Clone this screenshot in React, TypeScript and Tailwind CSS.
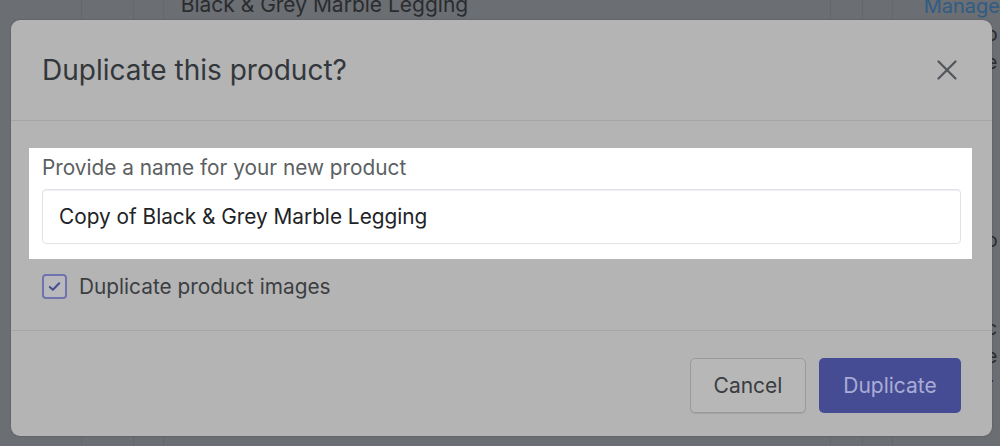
import { X } from 'lucide-react';

const font = { fontFamily: 'Inter, "Liberation Sans", sans-serif' };

function PageBehind() {
  return (
    <div className="flex h-full w-full text-[#2a2c2f]">
      <div className="w-[83px] border-r border-[#64676b]" />
      <div className="w-[52px] border-r border-[#64676b]" />
      <div className="w-[30px] border-r border-[#64676b]" />
      <div className="w-[673px] border-r border-[#64676b] pl-[17px]">
        <div className="-mt-[11px] text-[21px]">Black &amp; Grey Marble Legging</div>
      </div>
      <div className="w-[32px] border-r border-[#64676b]" />
      <div className="w-[30px] border-r border-[#64676b]" />
      <div className="flex-1 pl-[31px] text-[20px] leading-[28px]">
        <div className="-mt-[8px] text-[#2f5c86]">Manage</div>
        <div className="ml-[62px] flex flex-col">
          <span>o</span>
          <span>e</span>
          <span className="mt-[150px]">o</span>
          <span className="mt-[60px]">c</span>
          <span>e</span>
          <span>r</span>
        </div>
        <div className="-mt-[4px] ml-[24px]">your</div>
      </div>
    </div>
  );
}

function DuplicateModal() {
  return (
    <div className="absolute left-[11px] top-[20px] flex h-[416px] w-[981px] flex-col rounded-[9px] bg-[#b4b4b4] shadow-[0_0_2px_rgba(0,0,0,0.25)]">
      <div className="flex h-[101px] items-center justify-between border-b border-[#a5a5a5] pl-[31px] pr-[28px]">
        <h2 className="text-[28px] text-[#33373b]">Duplicate this product?</h2>
        <X className="h-[34px] w-[34px] text-[#53575b]" strokeWidth={1.6} />
      </div>

      <div className="flex h-[210px] flex-col border-b border-[#a5a5a5] px-[31px]">
        <div className="ml-[-13px] mr-[-11px] mt-[27px] bg-white pb-[15px] pl-[13px] pr-[11px] pt-[8px]">
          <label className="block text-[20.8px] leading-[24px] text-[#5c5f62]">
            Provide a name for your new product
          </label>
          <div className="mt-[9px] flex h-[55px] items-center rounded-[4px] border border-[#dfe3e8] px-[16px] text-[20.8px] text-[#212326] shadow-[inset_0_1px_0_#eef0f3]">
            Copy of Black &amp; Grey Marble Legging
          </div>
        </div>
        <div className="mt-[12px] flex items-center gap-[12px]">
          <span className="flex h-[25px] w-[25px] items-center justify-center rounded-[4px] border-2 border-[#7073ad] bg-[#b9b9bd]">
            <svg viewBox="0 0 16 16" className="h-[15px] w-[15px]">
              <path d="M3 8.5 6.3 11.5 13 4.5" fill="none" stroke="#474c93" strokeWidth="2.2" strokeLinecap="round" strokeLinejoin="round" />
            </svg>
          </span>
          <span className="text-[20.8px] text-[#3b3e42]">Duplicate product images</span>
        </div>
      </div>

      <div className="flex flex-1 items-start justify-end gap-[13px] pr-[31px] pt-[27px]">
        <button className="h-[55px] w-[116px] rounded-[5px] border border-[#999a9c] bg-[#b7b7b7] text-[21px] text-[#3a3d41] shadow-[0_1px_0_rgba(0,0,0,0.08)]">
          Cancel
        </button>
        <button className="h-[55px] w-[142px] rounded-[5px] bg-[#454c94] text-[21px] text-[#a9acd6]">
          Duplicate
        </button>
      </div>
    </div>
  );
}

export default function App() {
  return (
    <div className="relative h-[446px] w-[1000px] overflow-hidden bg-[#6b6e72]" style={font}>
      <PageBehind />
      <DuplicateModal />
    </div>
  );
}
